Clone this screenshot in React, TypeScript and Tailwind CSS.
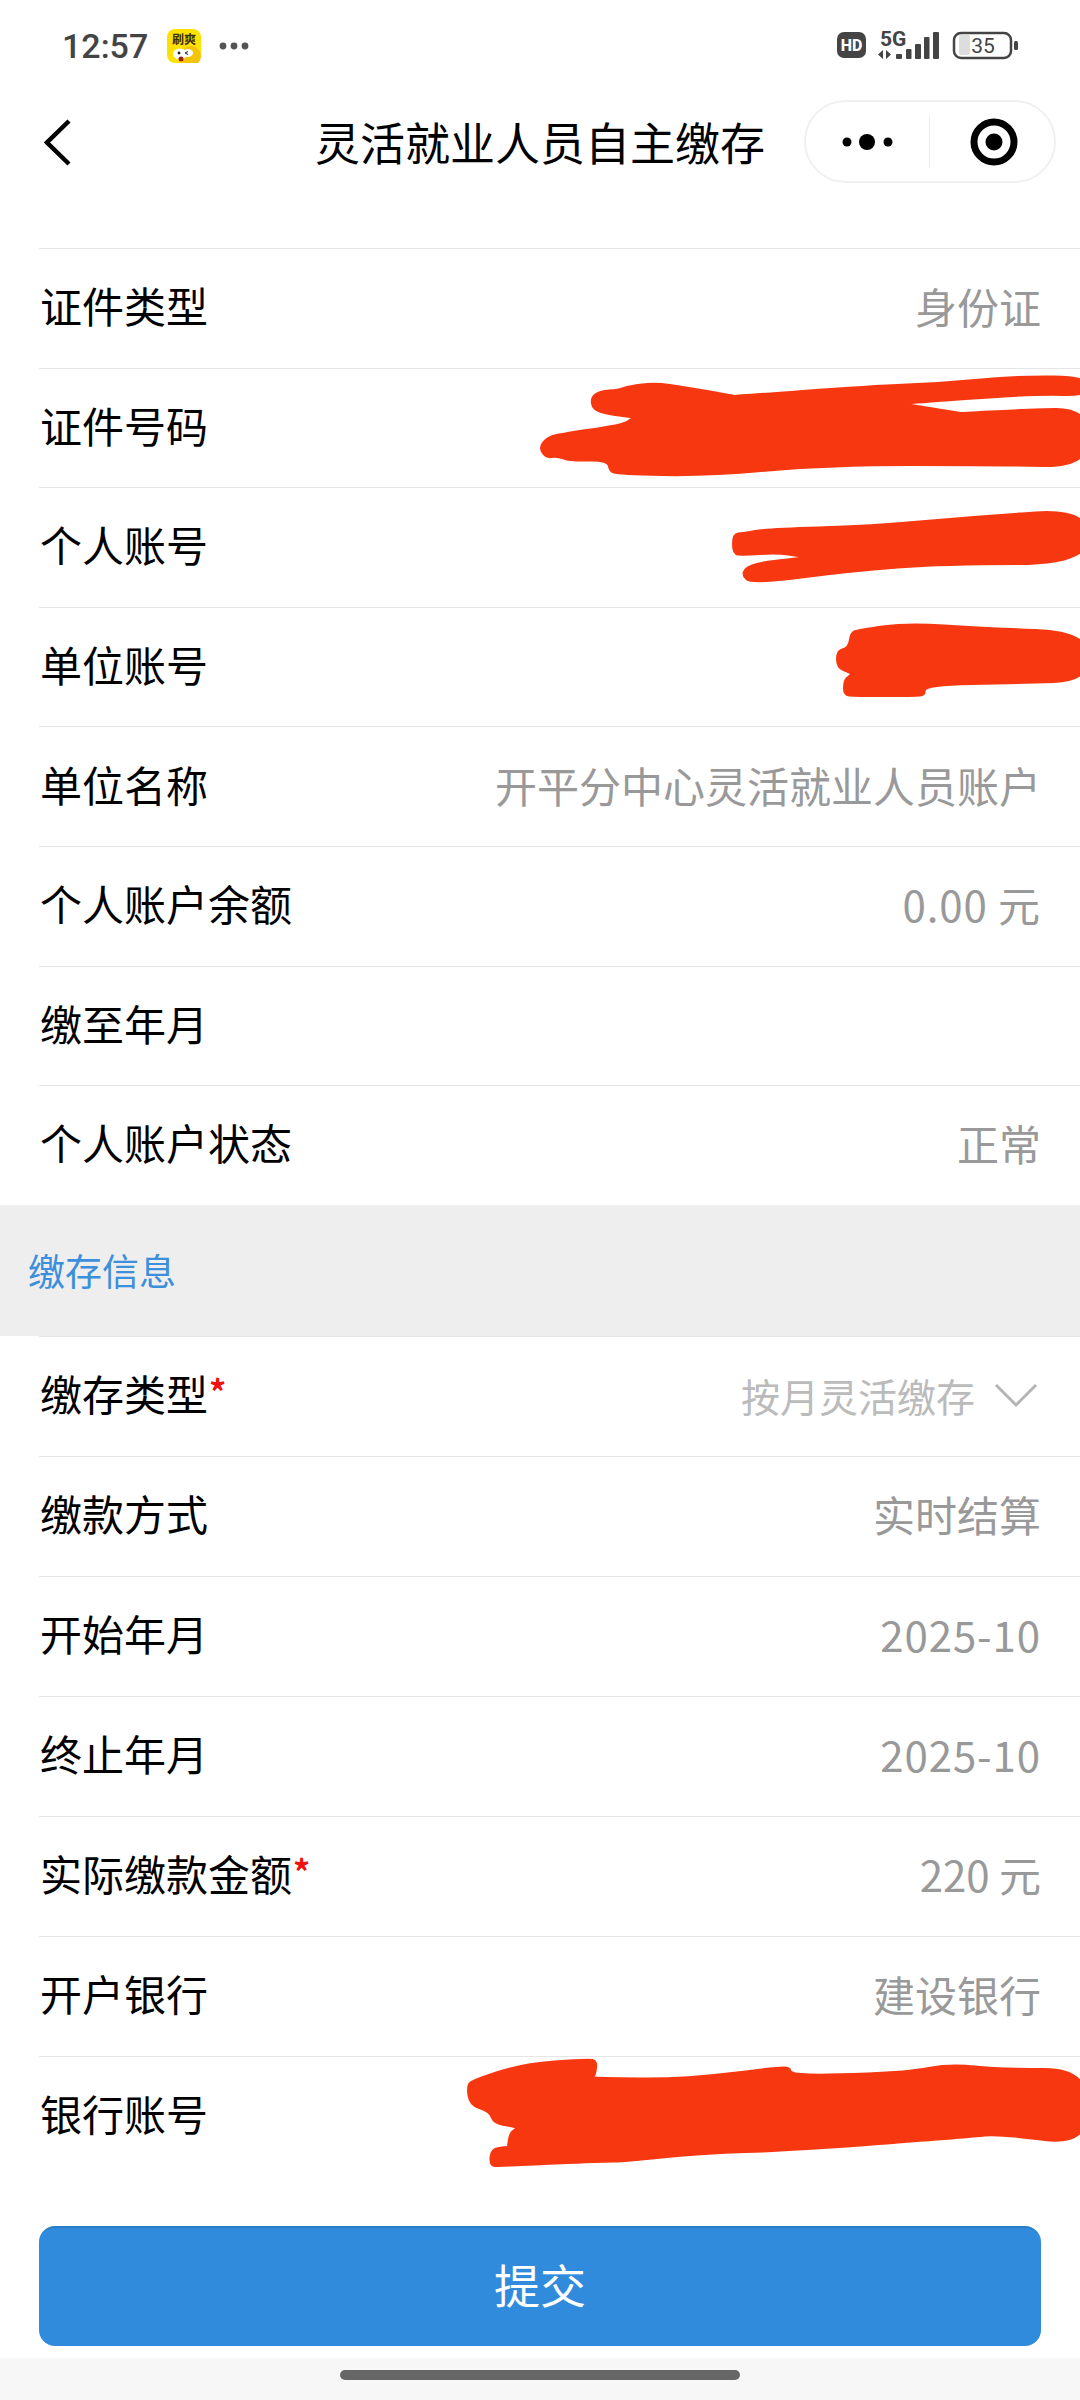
const fontStack = '"Noto Sans CJK SC", "Noto Sans", sans-serif';

type Point = [number, number];

// smooth closed outline through the points, for the marker scribbles
// (a point listed twice stays a sharp corner)
const blob = (pts: Point[]) => {
  const mid = (a: Point, b: Point): Point => [(a[0] + b[0]) / 2, (a[1] + b[1]) / 2];
  const start = mid(pts[pts.length - 1], pts[0]);
  let d = `M${start[0]} ${start[1]}`;
  pts.forEach((p, i) => {
    const m = mid(p, pts[(i + 1) % pts.length]);
    d += ` Q${p[0]} ${p[1]} ${m[0]} ${m[1]}`;
  });
  return d + " Z";
};

const scribbles: Point[][] = [
  [[600, 390], [618, 389], [629, 385], [655, 382], [685, 386], [735, 395], [735, 395], [870, 385], [944, 382], [1018, 375], [1090, 376], [1090, 397], [1036, 395], [911, 404], [911, 404], [961, 412], [961, 412], [1018, 409], [1090, 407], [1090, 468], [996, 466], [829, 466], [707, 477], [618, 475], [609, 472], [607, 461], [570, 462], [557, 457], [546, 459], [538, 448], [546, 437], [559, 433], [622, 424], [631, 418], [631, 418], [607, 415], [592, 410], [590, 397]],
  [[744, 532], [766, 528], [870, 525], [981, 515], [1090, 508], [1090, 565], [944, 565], [851, 572], [752, 585], [740, 575], [749, 563], [799, 557], [799, 557], [777, 554], [744, 556], [732, 555], [732, 533]],
  [[858, 629], [907, 622], [981, 627], [1090, 631], [1090, 682], [1018, 684], [925, 686], [926, 696], [914, 697], [855, 697], [843, 696], [843, 680], [850, 674], [850, 674], [836, 668], [836, 650], [848, 647], [850, 632]],
  [[473, 2079], [522, 2063], [587, 2058], [598, 2060], [596, 2076], [593, 2077], [685, 2078], [779, 2066], [791, 2067], [791, 2073], [828, 2074], [907, 2071], [950, 2063], [999, 2068], [1090, 2068], [1090, 2147], [999, 2135], [971, 2138], [787, 2152], [705, 2154], [618, 2163], [611, 2162], [501, 2167], [489, 2167], [490, 2148], [507, 2146], [507, 2146], [509, 2133], [515, 2128], [515, 2128], [493, 2124], [489, 2112], [469, 2106], [466, 2085]],
];

const accountRows = [
  { label: "证件类型", value: "身份证" },
  { label: "证件号码", value: "" },
  { label: "个人账号", value: "" },
  { label: "单位账号", value: "" },
  { label: "单位名称", value: "开平分中心灵活就业人员账户" },
  { label: "个人账户余额", value: "0.00 元", numeric: true },
  { label: "缴至年月", value: "" },
  { label: "个人账户状态", value: "正常" },
];

const depositRows = [
  { label: "缴款方式", value: "实时结算" },
  { label: "开始年月", value: "2025-10", numeric: true },
  { label: "终止年月", value: "2025-10", numeric: true },
  { label: "实际缴款金额", value: "220 元", required: true },
  { label: "开户银行", value: "建设银行" },
  { label: "银行账号", value: "" },
];

type RowProps = { label: string; value: string; required?: boolean; numeric?: boolean };

const Label = ({ label, required }: { label: string; required?: boolean }) => (
  <span className="text-[42px] text-black leading-none relative -top-[3px]">
    {label}
    {required && <span className="text-[#f01010] text-[34px] font-bold leading-none relative -top-[6px] ml-[1px]">*</span>}
  </span>
);

const Row = ({ label, value, required, numeric }: RowProps) => (
  <div className="ml-[39px] h-[119.6px] flex items-center justify-between border-t border-[#e6e6e6] pl-[1px] pr-[39px]">
    <Label label={label} required={required} />
    <span className={numeric ? "text-[42px] text-[#999999] leading-none relative -top-[2px] tracking-[0.9px]" : "text-[42px] text-[#999999] leading-none relative -top-[2px]"}>
      {value}
    </span>
  </div>
);

const StatusBar = () => (
  <div className="h-[90px] flex items-center justify-between pl-[62px] pr-[62px] pt-[2px]">
    <div className="flex items-center">
      <span className="text-[34px] font-medium text-[#444444] leading-none" style={{ fontFamily: "Roboto, sans-serif" }}>12:57</span>
      <svg width="34" height="34" viewBox="0 0 34 34" className="ml-[19px]">
        <rect width="34" height="34" rx="8" fill="#fde200" />
        <text x="17" y="15" textAnchor="middle" fontSize="12" fontWeight="700" fill="#3a3010" fontFamily='"Noto Sans CJK SC", sans-serif'>刷爽</text>
        <circle cx="24" cy="27" r="10" fill="#f3c40c" />
        <ellipse cx="13" cy="25" rx="7" ry="5.5" fill="#ffffff" />
        <ellipse cx="21" cy="24" rx="5" ry="4" fill="#ffffff" />
        <circle cx="12" cy="24" r="1.4" fill="#222222" />
        <path d="M18 24l3-1.5M18 24l3 1.5" stroke="#222222" strokeWidth="1" />
        <circle cx="14" cy="30" r="2.5" fill="#a02010" />
      </svg>
      <svg width="30" height="8" viewBox="0 0 30 8" className="ml-[18px]" fill="#555555">
        <circle cx="4" cy="4" r="3.4" />
        <circle cx="15" cy="4" r="3.4" />
        <circle cx="26" cy="4" r="3.4" />
      </svg>
    </div>
    <svg width="182" height="32" viewBox="0 0 182 32" className="overflow-visible">
      <rect x="1" y="2" width="29" height="26" rx="7" fill="#444444" />
      <text x="15.5" y="21" textAnchor="middle" fontSize="16" fontWeight="800" fill="#ffffff" fontFamily="Roboto, sans-serif">HD</text>
      <text x="44" y="15.5" fontSize="21" fontWeight="700" fill="#444444" fontFamily="Roboto, sans-serif">5G</text>
      <path d="M47 20v9l-5-4.5zM50 20v9l5-4.5z" fill="#444444" />
      <g fill="#444444">
        <rect x="60" y="24" width="6" height="5" rx="1" />
        <rect x="70" y="19" width="5.5" height="10" rx="1" />
        <rect x="79" y="14" width="6" height="15" rx="1" />
        <rect x="88" y="7" width="5.5" height="22" rx="1" />
        <rect x="97" y="2" width="6" height="27" rx="1" />
      </g>
      <rect x="118" y="3" width="57" height="25" rx="7" fill="none" stroke="#444444" strokeWidth="2.5" />
      <rect x="123" y="5" width="11" height="20" rx="2" fill="#dddddd" />
      <text x="147" y="23" textAnchor="middle" fontSize="21" fill="#444444" fontFamily="Roboto, sans-serif">35</text>
      <rect x="178" y="11" width="4" height="9" rx="1.5" fill="#444444" />
    </svg>
  </div>
);

const NavBar = () => (
  <div className="h-[158px] relative flex items-center justify-center pb-[56px]">
    <svg width="28" height="48" viewBox="0 0 28 48" fill="none" stroke="#000000" strokeWidth="4.5" className="absolute left-[44px] top-[29px]">
      <path d="M25 2 L3 23.5 L25 45" />
    </svg>
    <span className="text-[45px] text-black leading-none">灵活就业人员自主缴存</span>
    <div className="absolute left-[804px] top-[10px] w-[252px] h-[83px] rounded-full border-2 border-[#f0f0f0] flex items-center">
      <svg width="70" height="20" viewBox="0 0 70 20" className="ml-[26px]" fill="#000000">
        <circle cx="15" cy="10" r="4.5" />
        <circle cx="35" cy="10" r="8" />
        <circle cx="56" cy="10" r="4.5" />
      </svg>
      <div className="ml-[27px] w-px h-[52px] bg-[#eeeeee]" />
      <svg width="48" height="48" viewBox="0 0 48 48" className="ml-[40px]">
        <circle cx="24" cy="24" r="20" fill="none" stroke="#000000" strokeWidth="7" />
        <circle cx="24" cy="24" r="8.5" fill="#000000" />
      </svg>
    </div>
  </div>
);

const App = () => {
  return (
    <div className="relative w-[1080px] h-[2400px] overflow-hidden bg-white flex flex-col" style={{ fontFamily: fontStack }}>
      <StatusBar />
      <NavBar />

      {accountRows.map((row) => (
        <Row key={row.label} {...row} />
      ))}

      <div className="h-[131px] bg-[#eeeeee] flex items-center pl-[28px]">
        <span className="text-[37px] text-[#3c8fdb] leading-none">缴存信息</span>
      </div>

      <div className="ml-[39px] h-[120px] flex items-center justify-between border-t border-[#e6e6e6] pl-[1px] pr-[42px]">
        <Label label="缴存类型" required />
        <span className="flex items-center relative -top-[1px]">
          <span className="text-[39px] text-[#bbbbbb] leading-none">按月灵活缴存</span>
          <svg width="44" height="26" viewBox="0 0 44 26" fill="none" stroke="#b5b5b5" strokeWidth="3" className="ml-[19px]">
            <path d="M2 3 L22 23 L42 3" />
          </svg>
        </span>
      </div>

      <div className="flex flex-col [&>div]:h-[120px]">
        {depositRows.map((row) => (
          <Row key={row.label} {...row} />
        ))}
      </div>

      <div className="flex-1 px-[39px] pt-[50px]">
        <button className="w-full h-[120px] rounded-[16px] bg-[#318bdd] border-t-2 border-[#2a7cc4] text-white text-[46px] leading-none pb-[8px]">
          提交
        </button>
      </div>

      <div className="h-[42px] bg-[#f7f7f7] flex justify-center pt-[12px]">
        <div className="w-[400px] h-[10px] rounded-full bg-[#666666]" />
      </div>

      {/* red marker over the private numbers */}
      <svg width="1080" height="2400" viewBox="0 0 1080 2400" className="absolute inset-0 pointer-events-none">
        {scribbles.map((pts, i) => (
          <path key={i} d={blob(pts)} fill="#f7370f" />
        ))}
      </svg>
    </div>
  );
};

export default App;
